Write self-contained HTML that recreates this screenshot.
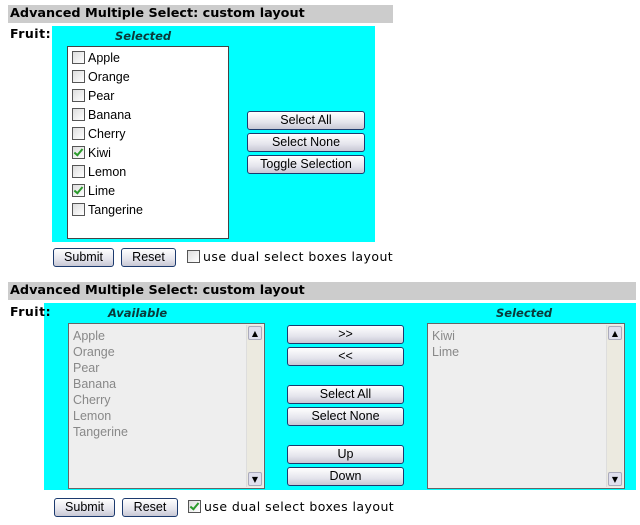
<!DOCTYPE html>
<html><head><style>
body{margin:0;width:640px;height:525px;background:#fff;font-family:"DejaVu Sans","Liberation Sans",sans-serif;position:relative;overflow:hidden}
.a{position:absolute}
.hd{background:#ccc;font-weight:bold;font-size:12.8px;line-height:17px;padding-left:2px;box-sizing:border-box;color:#000}
.fr{font-weight:bold;font-size:12.5px;z-index:2;letter-spacing:0.5px}
.cy{background:#00ffff}
.lab{font-weight:bold;font-style:italic;font-size:11.5px;color:#0a3a3a}
.btn{position:absolute;box-sizing:border-box;border:1px solid #1c3a6e;border-radius:3px;background:linear-gradient(#fff,#e4e4ec 60%,#c8c8d4);font-family:"Liberation Sans",sans-serif;font-size:12.5px;text-align:center;line-height:17px;color:#000}
.lb{background:#fff;border:1px solid #444;box-sizing:border-box}
.it{position:absolute;left:4px;font-family:"Liberation Sans",sans-serif;font-size:12.5px;height:19px;line-height:19px}
.cb{display:inline-block;width:11px;height:11px;border:1px solid #555;background:linear-gradient(135deg,#ddd,#fff);vertical-align:-2px;margin-right:3px;position:relative}
.cb.c::after{content:"";position:absolute;left:3px;top:0px;width:3px;height:7px;border:solid #2a9a2a;border-width:0 2px 2px 0;transform:rotate(40deg)}
.gl{background:#eee;border:1px solid #666;box-sizing:border-box}
.gi{font-family:"Liberation Sans",sans-serif;font-size:12.5px;color:#888;line-height:16px;position:absolute;left:4px;top:4px}
.sb{position:absolute;right:1px;top:1px;bottom:1px;width:16px;background:#eceae0;border-left:1px solid #ddd}
.sa{position:absolute;left:1px;width:14px;height:14px;border:1px solid #aab;border-radius:2px;background:#e0e0ee;font-size:8px;text-align:center;line-height:14px;box-sizing:border-box}
.ck{font-family:"DejaVu Sans",sans-serif;font-size:12.5px;letter-spacing:0.45px}
</style></head><body>
<div class="a hd" style="left:8px;top:5px;width:385px;height:18px">Advanced Multiple Select: custom layout</div>
<div class="a fr" style="left:10px;top:26px">Fruit:</div>
<div class="a cy" style="left:52px;top:26px;width:323px;height:216px"></div>
<div class="a lab" style="left:115px;top:29px">Selected</div>
<div class="a lb" style="left:67px;top:46px;width:162px;height:193px">
<div class="it" style="top:2px"><span class="cb"></span>Apple</div>
<div class="it" style="top:21px"><span class="cb"></span>Orange</div>
<div class="it" style="top:40px"><span class="cb"></span>Pear</div>
<div class="it" style="top:59px"><span class="cb"></span>Banana</div>
<div class="it" style="top:78px"><span class="cb"></span>Cherry</div>
<div class="it" style="top:97px"><span class="cb c"></span>Kiwi</div>
<div class="it" style="top:116px"><span class="cb"></span>Lemon</div>
<div class="it" style="top:135px"><span class="cb c"></span>Lime</div>
<div class="it" style="top:154px"><span class="cb"></span>Tangerine</div>
</div>
<div class="btn" style="left:247px;top:111px;width:118px;height:19px">Select All</div>
<div class="btn" style="left:247px;top:133px;width:118px;height:19px">Select None</div>
<div class="btn" style="left:247px;top:155px;width:118px;height:19px">Toggle Selection</div>
<div class="btn" style="left:53px;top:248px;width:61px;height:19px">Submit</div>
<div class="btn" style="left:121px;top:248px;width:55px;height:19px">Reset</div>
<div class="a ck" style="left:187px;top:249px"><span class="cb"></span>use dual select boxes layout</div>

<div class="a hd" style="left:8px;top:282px;width:628px;height:18px">Advanced Multiple Select: custom layout</div>
<div class="a fr" style="left:10px;top:304px">Fruit:</div>
<div class="a cy" style="left:44px;top:303px;width:592px;height:187px"></div>
<div class="a lab" style="left:108px;top:306px">Available</div>
<div class="a lab" style="left:496px;top:306px">Selected</div>
<div class="a gl" style="left:68px;top:323px;width:197px;height:166px">
<div class="gi">Apple<br>Orange<br>Pear<br>Banana<br>Cherry<br>Lemon<br>Tangerine</div>
<div class="sb"><div class="sa" style="top:1px">▲</div><div class="sa" style="bottom:1px">▼</div></div>
</div>
<div class="a gl" style="left:427px;top:323px;width:198px;height:166px">
<div class="gi">Kiwi<br>Lime</div>
<div class="sb"><div class="sa" style="top:1px">▲</div><div class="sa" style="bottom:1px">▼</div></div>
</div>
<div class="btn" style="left:287px;top:325px;width:117px;height:19px">&gt;&gt;</div>
<div class="btn" style="left:287px;top:347px;width:117px;height:19px">&lt;&lt;</div>
<div class="btn" style="left:287px;top:385px;width:117px;height:19px">Select All</div>
<div class="btn" style="left:287px;top:407px;width:117px;height:19px">Select None</div>
<div class="btn" style="left:287px;top:445px;width:117px;height:19px">Up</div>
<div class="btn" style="left:287px;top:467px;width:117px;height:19px">Down</div>
<div class="btn" style="left:54px;top:498px;width:61px;height:19px">Submit</div>
<div class="btn" style="left:122px;top:498px;width:56px;height:19px">Reset</div>
<div class="a ck" style="left:188px;top:499px"><span class="cb c"></span>use dual select boxes layout</div>
</body></html>
